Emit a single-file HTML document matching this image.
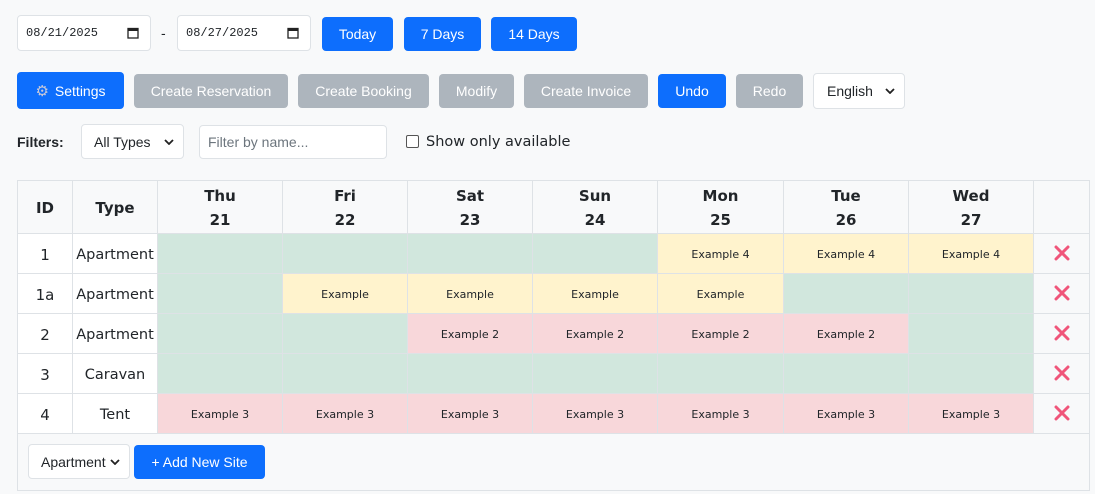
<!DOCTYPE html>
<html><head><style>
*{box-sizing:border-box;margin:0;padding:0}
body{width:1095px;height:494px;background:#f8f9fa;font-family:"Liberation Sans",sans-serif;position:relative;overflow:hidden;color:#212529}
.a{position:absolute}
.btn{position:absolute;border-radius:4px;color:#fff;font-size:14px;display:flex;align-items:center;justify-content:center}
.p{background:#0d6efd}.g{background:#adb5bd}
.inp{position:absolute;background:#fff;border:1px solid #dee2e6;border-radius:4px;display:flex;align-items:center;font-size:14px}
.mono{font-family:"Liberation Mono",monospace;font-size:12px}
table{position:absolute;left:17px;top:180px;border-collapse:collapse;table-layout:fixed;font-family:"DejaVu Sans",sans-serif}
td,th{border:1px solid #dee2e6;text-align:center;padding:0}
th{height:53px;background:#f8f9fa;font-size:15px;font-weight:bold;line-height:24px;padding-top:2px}
td{height:40px;font-size:11px;padding-top:2px}
td.id{font-size:15px;background:#fff}
td.t{font-size:14.5px;background:#fff}
.f{background:#d1e7dd}.y{background:#fff3cd}.r{background:#f8d7da}
td.x{background:#f8f9fa}
.chev{margin-left:auto;margin-right:9px;display:flex}
</style></head><body>
<svg width="0" height="0" style="position:absolute"><defs>
<symbol id="cal" viewBox="0 0 12 12"><rect x="1" y="1.5" width="10" height="9.5" fill="none" stroke="#222" stroke-width="1.3"/><rect x="1" y="1.5" width="10" height="2.5" fill="#222"/></symbol>
<symbol id="ch" viewBox="0 0 10 6"><path d="M1 1 L5 5 L9 1" fill="none" stroke="#222" stroke-width="1.8"/></symbol>
<symbol id="xx" viewBox="0 0 16 16"><path d="M2 2 L14 14 M14 2 L2 14" stroke="#f0557a" stroke-width="3" stroke-linecap="round"/></symbol>
</defs></svg>
<div class="inp mono" style="left:17px;top:15px;width:134px;height:36px;padding-left:8px">08/21/2025<svg style="margin-left:auto;margin-right:11px" width="12" height="12"><use href="#cal"/></svg></div>
<div class="a" style="left:161px;top:25px;font-size:14px">-</div>
<div class="inp mono" style="left:177px;top:15px;width:134px;height:36px;padding-left:8px">08/27/2025<svg style="margin-left:auto;margin-right:11px" width="12" height="12"><use href="#cal"/></svg></div>
<div class="btn p" style="left:322px;top:17px;width:71px;height:34px">Today</div>
<div class="btn p" style="left:404px;top:17px;width:77px;height:34px">7 Days</div>
<div class="btn p" style="left:491px;top:17px;width:86px;height:34px">14 Days</div>

<div class="btn p" style="left:17px;top:72px;width:107px;height:37px"><span style="color:#c9c9d9;margin-right:6px;font-size:15px;font-family:'DejaVu Sans',sans-serif">&#9881;</span>Settings</div>
<div class="btn g" style="left:134px;top:74px;width:154px;height:34px">Create Reservation</div>
<div class="btn g" style="left:298px;top:74px;width:131px;height:34px">Create Booking</div>
<div class="btn g" style="left:439px;top:74px;width:75px;height:34px">Modify</div>
<div class="btn g" style="left:524px;top:74px;width:124px;height:34px">Create Invoice</div>
<div class="btn p" style="left:658px;top:74px;width:68px;height:34px">Undo</div>
<div class="btn g" style="left:736px;top:74px;width:67px;height:34px">Redo</div>
<div class="inp" style="left:813px;top:73px;width:92px;height:36px;padding-left:13px">English<svg class="chev" width="10" height="6"><use href="#ch"/></svg></div>

<div class="a" style="left:17px;top:134px;font-size:14px;font-weight:bold">Filters:</div>
<div class="inp" style="left:81px;top:124px;width:103px;height:35px;padding-left:12px">All Types<svg class="chev" width="10" height="6"><use href="#ch"/></svg></div>
<div class="inp" style="left:199px;top:125px;width:188px;height:34px;padding-left:8px;color:#6c757d">Filter by name...</div>
<div class="a" style="left:406px;top:135px;width:13px;height:13px;border:1px solid #555;border-radius:2px;background:#fff"></div>
<div class="a" style="left:426px;top:134px;font-family:'DejaVu Sans',sans-serif;font-size:14.5px">Show only available</div>

<div class="a" style="left:17px;top:180px;width:1073px;height:311px;border:1px solid #dee2e6;background:#f8f9fa"></div>
<table>
<colgroup><col style="width:55px"><col style="width:85px"><col style="width:125px"><col style="width:125px"><col style="width:125px"><col style="width:125px"><col style="width:126px"><col style="width:125px"><col style="width:125px"><col style="width:56px"></colgroup>
<tr><th>ID</th><th>Type</th><th>Thu<br>21</th><th>Fri<br>22</th><th>Sat<br>23</th><th>Sun<br>24</th><th>Mon<br>25</th><th>Tue<br>26</th><th>Wed<br>27</th><th></th></tr>
<tr><td class="id">1</td><td class="t">Apartment</td><td class="f"></td><td class="f"></td><td class="f"></td><td class="f"></td><td class="y">Example 4</td><td class="y">Example 4</td><td class="y">Example 4</td><td class="x"><svg width="16" height="16"><use href="#xx"/></svg></td></tr>
<tr><td class="id">1a</td><td class="t">Apartment</td><td class="f"></td><td class="y">Example</td><td class="y">Example</td><td class="y">Example</td><td class="y">Example</td><td class="f"></td><td class="f"></td><td class="x"><svg width="16" height="16"><use href="#xx"/></svg></td></tr>
<tr><td class="id">2</td><td class="t">Apartment</td><td class="f"></td><td class="f"></td><td class="r">Example 2</td><td class="r">Example 2</td><td class="r">Example 2</td><td class="r">Example 2</td><td class="f"></td><td class="x"><svg width="16" height="16"><use href="#xx"/></svg></td></tr>
<tr><td class="id">3</td><td class="t">Caravan</td><td class="f"></td><td class="f"></td><td class="f"></td><td class="f"></td><td class="f"></td><td class="f"></td><td class="f"></td><td class="x"><svg width="16" height="16"><use href="#xx"/></svg></td></tr>
<tr><td class="id">4</td><td class="t">Tent</td><td class="r">Example 3</td><td class="r">Example 3</td><td class="r">Example 3</td><td class="r">Example 3</td><td class="r">Example 3</td><td class="r">Example 3</td><td class="r">Example 3</td><td class="x"><svg width="16" height="16"><use href="#xx"/></svg></td></tr>
</table>
<div class="inp" style="left:28px;top:444px;width:102px;height:35px;padding-left:12px">Apartment<svg class="chev" width="10" height="6"><use href="#ch"/></svg></div>
<div class="btn p" style="left:134px;top:445px;width:131px;height:34px">+ Add New Site</div>
</body></html>
